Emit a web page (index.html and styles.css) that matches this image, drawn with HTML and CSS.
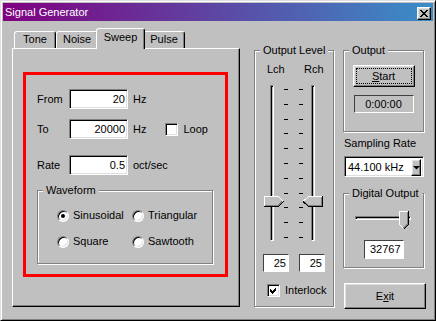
FILE: index.html
```html
<!DOCTYPE html>
<html lang="en">
<head>
    <meta charset="UTF-8">
    <meta name="viewport" content="width=device-width, initial-scale=1.0">
    <title>Signal Generator</title>
    <link rel="stylesheet" href="styles.css">
</head>
<body>

<div class="window">
    <div class="titlebar">
        <span class="title">Signal Generator</span>
        <button class="close raised" title="Close">
            <svg width="8" height="7" viewBox="0 0 8 7"><path d="M0 0h2v1h-2z M6 0h2v1h-2z M1 1h2v1h-2z M5 1h2v1h-2z M2 2h4v1h-4z M3 3h2v1h-2z M2 4h4v1h-4z M1 5h2v1h-2z M5 5h2v1h-2z M0 6h2v1h-2z M6 6h2v1h-2z" fill="#000"/></svg>
        </button>
    </div>

    <div class="dialog">
        <div class="tabs">
            <div class="tab-strip">
                <div class="tab">Tone</div>
                <div class="tab">Noise</div>
                <div class="tab active">Sweep</div>
                <div class="tab">Pulse</div>
            </div>
            <div class="tab-page">
                <div class="sweep">
                    <div class="field">
                        <label class="field-label" for="from">From</label>
                        <input class="edit sunken" id="from" type="text" value="20">
                        <span class="unit">Hz</span>
                    </div>
                    <div class="field">
                        <label class="field-label" for="to">To</label>
                        <input class="edit sunken" id="to" type="text" value="20000">
                        <span class="unit">Hz</span>
                        <label class="check loop"><span class="checkbox sunken"></span>Loop</label>
                    </div>
                    <div class="field rate">
                        <label class="field-label" for="rate">Rate</label>
                        <input class="edit sunken" id="rate" type="text" value="0.5">
                        <span class="unit">oct/sec</span>
                    </div>
                    <fieldset class="group waveform">
                        <legend>Waveform</legend>
                        <div class="radios">
                            <label class="radio"><span class="dot checked"></span>Sinusoidal</label>
                            <label class="radio"><span class="dot"></span>Triangular</label>
                            <label class="radio"><span class="dot"></span>Square</label>
                            <label class="radio"><span class="dot"></span>Sawtooth</label>
                        </div>
                    </fieldset>
                </div>
            </div>
        </div>

        <fieldset class="group level">
            <legend>Output Level</legend>
            <div class="ch-labels">
                <span>Lch</span>
                <span>Rch</span>
            </div>
            <div class="sliders">
                <div class="vslider">
                    <div class="track"></div>
                    <svg class="thumb" style="top: 111px" width="20" height="11" viewBox="0 0 20 11" shape-rendering="crispEdges">
                        <path d="M0 0H14L19 5L14 10H0Z" fill="#c0c0c0"/>
                        <path d="M0.5 10V0.5H14.5L19 5" fill="none" stroke="#fff"/>
                        <path d="M0 10.5H14.5L19.5 5.5" fill="none" stroke="#000"/>
                        <path d="M1 9.5H14L18 5.5" fill="none" stroke="#808080"/>
                    </svg>
                </div>
                <div class="ticks">
                    <span></span><span></span><span></span><span></span><span></span><span></span>
                    <span></span><span></span><span></span><span></span><span></span>
                </div>
                <div class="ticks right">
                    <span></span><span></span><span></span><span></span><span></span><span></span>
                    <span></span><span></span><span></span><span></span><span></span>
                </div>
                <div class="vslider flip">
                    <div class="track"></div>
                    <svg class="thumb" style="top: 111px" width="20" height="11" viewBox="0 0 20 11" shape-rendering="crispEdges">
                        <path d="M5 0H19V10H5L0 5Z" fill="#c0c0c0"/>
                        <path d="M0.5 5L5.5 0.5H19" fill="none" stroke="#fff"/>
                        <path d="M0 5.5L5.5 10.5H19.5V0" fill="none" stroke="#000"/>
                        <path d="M1.5 5.5L5.5 9.5H18.5V1" fill="none" stroke="#808080"/>
                    </svg>
                </div>
            </div>
            <div class="level-values">
                <span class="value-box">25</span>
                <span class="value-box">25</span>
            </div>
            <label class="check interlock">
                <span class="checkbox sunken">
                    <svg width="9" height="9" viewBox="0 0 9 9"><path d="M1 3h1v1h1v1h1v-1h1v-1h1v-1h1v3h-1v1h-1v1h-1v1h-1v-1h-1v-1h-1z" fill="#000"/></svg>
                </span>
                Interlock
            </label>
        </fieldset>

        <div class="side">
            <fieldset class="group output">
                <legend>Output</legend>
                <button class="btn raised start"><u>S</u>tart</button>
                <div class="time">0:00:00</div>
            </fieldset>

            <div class="rate-label">Sampling Rate</div>
            <div class="combo sunken">
                <span class="combo-value">44.100 kHz</span>
                <span class="combo-arrow raised">
                    <svg width="7" height="4" viewBox="0 0 7 4"><path d="M0 0H7L3.5 3.5Z" fill="#000"/></svg>
                </span>
            </div>

            <fieldset class="group digital">
                <legend>Digital Output</legend>
                <div class="hslider">
                    <div class="track"></div>
                    <svg class="thumb" width="10" height="18" viewBox="0 0 10 18" shape-rendering="crispEdges">
                        <path d="M0 0H9V13L4.5 17.5L0 13Z" fill="#c0c0c0"/>
                        <path d="M0.5 13.5V0.5H9 M0.5 13.5L4.5 17.5" fill="none" stroke="#fff"/>
                        <path d="M9.5 0V13.5L5 18" fill="none" stroke="#000"/>
                        <path d="M8.5 1V13L4.5 17" fill="none" stroke="#808080"/>
                    </svg>
                </div>
                <span class="value-box digital-value">32767</span>
            </fieldset>

            <button class="btn raised exit">E<u>x</u>it</button>
        </div>
    </div>
</div>

</body>
</html>
```

FILE: styles.css
```css
* {
    box-sizing: border-box;
}
body {
    margin: 0;
    font-family: "Liberation Sans", Arial, sans-serif;
    font-size: 11px;
    line-height: 13px;
    color: #000;
    background-color: #c0c0c0;
}
.raised {
    background-color: #c0c0c0;
    border: 1px solid;
    border-color: #fff #000 #000 #fff;
    box-shadow: inset -1px -1px #808080, inset 1px 1px #dfdfdf;
}
.sunken {
    background-color: #fff;
    border: 1px solid;
    border-color: #808080 #fff #fff #808080;
    box-shadow: inset 1px 1px #000, inset -1px -1px #dfdfdf;
}
.window {
    width: 436px;
    height: 321px;
    padding: 2px;
    background-color: #c0c0c0;
    border: 1px solid;
    border-color: #dfdfdf #000 #000 #dfdfdf;
    box-shadow: inset 1px 1px #fff, inset -1px -1px #808080;
}
.titlebar {
    display: flex;
    align-items: center;
    justify-content: space-between;
    height: 18px;
    padding: 0 2px;
    color: #fff;
    background: linear-gradient(to right, #800080, #3a8ec8);
}
.close {
    display: flex;
    align-items: center;
    justify-content: center;
    width: 14px;
    height: 13px;
    margin-top: 2px;
    padding: 0;
}
.dialog {
    display: flex;
    align-items: flex-start;
    padding: 7px 0 0 9px;
}

/* tabs */
.tabs {
    width: 228px;
}
.tab-strip {
    display: flex;
    align-items: flex-end;
    height: 20px;
    padding-left: 2px;
}
.tab {
    width: 42px;
    height: 17px;
    text-align: center;
    line-height: 15px;
    border: 1px solid;
    border-bottom: none;
    border-color: #fff #000 #000 #fff;
    border-radius: 3px 3px 0 0;
    box-shadow: inset -1px 0 #808080;
}
.tab.active {
    position: relative;
    z-index: 1;
    width: 49px;
    height: 21px;
    margin: 0 -2px -1px;
    line-height: 17px;
    background-color: #c0c0c0;
}
.tab-page {
    height: 259px;
    padding: 23px 0 0 10px;
    border: 1px solid;
    border-color: #fff #000 #000 #fff;
    box-shadow: inset -1px -1px #808080;
}
.sweep {
    width: 205px;
    height: 205px;
    padding: 14px 0 0 11px;
    border: 3px solid #f00;
}
.field {
    display: flex;
    align-items: center;
    height: 20px;
}
.field + .field {
    margin-top: 10px;
}
.field.rate {
    margin-top: 16px;
}
.field-label {
    width: 32px;
}
.edit {
    width: 59px;
    height: 20px;
    padding: 0 2px 0 0;
    font: inherit;
    text-align: right;
    outline: none;
}
.unit {
    margin-left: 5px;
}
.check {
    display: flex;
    align-items: center;
    gap: 5px;
}
.loop {
    margin-left: 19px;
}
.checkbox {
    display: flex;
    align-items: center;
    justify-content: center;
    width: 13px;
    height: 13px;
}

/* group boxes */
.group {
    min-width: 0;
    margin: 0;
    padding: 0;
    border: 1px solid #808080;
    box-shadow: inset 1px 1px #fff, 1px 1px #fff;
}
.group legend {
    margin-left: 5px;
    padding: 0 3px;
    line-height: 13px;
    background-color: #c0c0c0;
}
.waveform {
    width: 176px;
    height: 80px;
    margin-top: 9px;
}
.radios {
    display: grid;
    grid-template-columns: 75px auto;
    row-gap: 13px;
    padding: 12px 0 0 19px;
}
.radio {
    display: flex;
    align-items: center;
    gap: 4px;
}
.dot {
    display: flex;
    align-items: center;
    justify-content: center;
    width: 12px;
    height: 12px;
    background-color: #fff;
    border: 1px solid;
    border-color: #808080 #fff #fff #808080;
    border-radius: 50%;
    box-shadow: inset 1px 1px #000, inset -1px -1px #dfdfdf;
}
.dot.checked::after {
    content: "";
    width: 4px;
    height: 4px;
    border-radius: 50%;
    background-color: #000;
}

/* output level */
.level {
    width: 80px;
    height: 263px;
    margin: 16px 0 0 14px;
}
.ch-labels {
    display: grid;
    grid-template-columns: 37px auto;
    padding: 6px 0 0 12px;
}
.sliders {
    display: flex;
    height: 156px;
    margin-top: 9px;
    padding-left: 9px;
}
.vslider {
    position: relative;
    width: 20px;
}
.vslider .track {
    width: 4px;
    height: 100%;
    margin-left: 6px;
    border: 1px solid;
    border-color: #808080 #fff #fff #808080;
    box-shadow: inset 1px 1px #000;
}
.vslider.flip .track {
    margin-left: 8px;
}
.thumb {
    position: absolute;
    left: 0;
    display: block;
}
.ticks {
    display: flex;
    flex-direction: column;
    justify-content: space-between;
    width: 4px;
    height: 149px;
    margin-top: 4px;
}
.ticks span {
    height: 1px;
    background-color: #000;
}
.ticks.right {
    margin-left: 11px;
}
.level-values {
    display: flex;
    gap: 10px;
    margin-top: 13px;
    padding-left: 8px;
}
.value-box {
    display: block;
    width: 26px;
    height: 18px;
    padding-right: 2px;
    line-height: 16px;
    text-align: right;
    background-color: #fff;
    border: 1px solid;
    border-color: #404040 #fff #fff #404040;
}
.interlock {
    margin-top: 12px;
    padding-left: 12px;
}

/* right column */
.side {
    width: 82px;
    margin: 16px 0 0 9px;
}
.output {
    width: 81px;
    padding: 8px 0 18px;
}
.btn {
    display: block;
    padding: 0;
    font: inherit;
    color: #000;
}
.start {
    width: 62px;
    height: 22px;
    margin: 0 auto;
    outline: 1px dotted #000;
    outline-offset: -4px;
}
.time {
    width: 60px;
    height: 18px;
    margin: 8px auto 0;
    line-height: 16px;
    text-align: center;
    border: 1px solid;
    border-color: #404040 #fff #fff #404040;
}
.rate-label {
    margin-top: 5px;
    padding-left: 1px;
}
.combo {
    display: flex;
    width: 80px;
    height: 21px;
    margin: 6px 0 0 1px;
    padding: 2px;
}
.combo-value {
    flex: 1;
    padding-left: 1px;
    line-height: 17px;
}
.combo-arrow {
    display: flex;
    align-items: center;
    justify-content: center;
    width: 10px;
    height: 17px;
}
.digital {
    width: 81px;
    margin-top: 10px;
    padding: 11px 0 8px;
}
.hslider {
    position: relative;
    width: 56px;
    height: 18px;
    margin-left: 11px;
    padding-top: 5px;
}
.hslider .track {
    height: 4px;
    border: 1px solid;
    border-color: #808080 #fff #fff #808080;
    box-shadow: inset 1px 1px #000;
}
.hslider .thumb {
    top: 0;
    left: auto;
    right: 2px;
}
.digital-value {
    width: 40px;
    height: 19px;
    margin: 11px auto 0;
    line-height: 17px;
}
.exit {
    width: 82px;
    height: 26px;
    margin: 15px 0 0 1px;
}
```
